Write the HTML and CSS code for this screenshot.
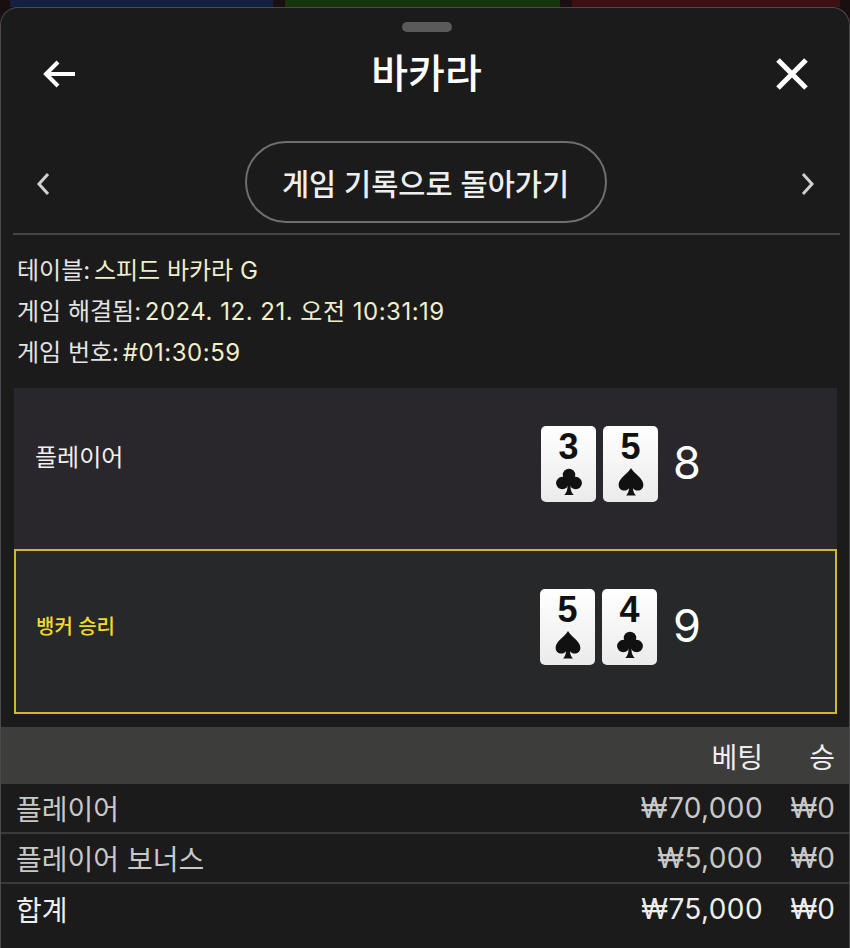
FILE: index.html
```html
<!DOCTYPE html>
<html lang="en">
<head>
    <meta charset="UTF-8">
    <meta name="viewport" content="width=device-width, initial-scale=1.0">
    <title>바카라</title>
    <link rel="stylesheet" href="styles.css">
</head>
<body>
    <svg class="sprites" width="0" height="0">
        <symbol id="club" viewBox="0 0 24 26">
            <circle cx="12" cy="6.5" r="5.8"/>
            <circle cx="5.8" cy="14" r="5.8"/>
            <circle cx="18.2" cy="14" r="5.8"/>
            <path d="M10.6 9h2.8v8c0 3.5.9 6 3 8H7.6c2.1-2 3-4.500 3-8z"/>
        </symbol>
        <symbol id="spade" viewBox="0 0 24 26">
            <path d="M12 0c2 4.500 11.500 9.500 11.500 15.500 0 3.500-2.500 5.500-5.200 5.500-1.800 0-3.300-.8-4.500-2.200.2 2.800 1 4.900 2.800 6.700H7.400c1.800-1.800 2.600-3.900 2.800-6.700C9 20.200 7.500 21 5.700 21 3 21 .5 19 .5 15.500.5 9.500 10 4.500 12 0z"/>
        </symbol>
    </svg>

    <div class="backdrop">
        <div class="backdrop-blue"></div>
        <div class="backdrop-green"></div>
        <div class="backdrop-red"></div>
    </div>

    <div class="sheet">
        <div class="handle"></div>

        <div class="header">
            <svg class="icon-back" viewBox="0 0 36 30">
                <path d="M33 15H4M16 3 4 15l12 12"/>
            </svg>
            <h1>바카라</h1>
            <svg class="icon-close" viewBox="0 0 34 34">
                <path d="M3 3l28 28M31 3 3 31"/>
            </svg>
        </div>

        <div class="nav">
            <svg class="chevron" viewBox="0 0 14 24"><path d="M12 2 3 12l9 10"/></svg>
            <button class="back-btn">게임 기록으로 돌아가기</button>
            <svg class="chevron" viewBox="0 0 14 24"><path d="M2 2l9 10-9 10"/></svg>
        </div>

        <div class="info">
            <p>테이블: <span>스피드 바카라 G</span></p>
            <p>게임 해결됨: <span class="digits">2024. 12. 21. 오전 10:31:19</span></p>
            <p>게임 번호: <span class="digits">#01:30:59</span></p>
        </div>

        <div class="hands">
            <div class="hand">
                <div class="hand-name">플레이어</div>
                <div class="cards">
                    <div class="card">3<svg><use href="#club"/></svg></div>
                    <div class="card">5<svg><use href="#spade"/></svg></div>
                </div>
                <div class="score">8</div>
            </div>
            <div class="hand winner">
                <div class="hand-name">뱅커 승리</div>
                <div class="cards">
                    <div class="card">5<svg><use href="#spade"/></svg></div>
                    <div class="card">4<svg><use href="#club"/></svg></div>
                </div>
                <div class="score">9</div>
            </div>
        </div>

        <div class="bets">
            <div class="row head">
                <span class="name"></span><span class="bet">베팅</span><span class="win">승</span>
            </div>
            <div class="row">
                <span class="name">플레이어</span><span class="bet">₩70,000</span><span class="win">₩0</span>
            </div>
            <div class="row">
                <span class="name">플레이어 보너스</span><span class="bet">₩5,000</span><span class="win">₩0</span>
            </div>
            <div class="row total">
                <span class="name">합계</span><span class="bet">₩75,000</span><span class="win">₩0</span>
            </div>
        </div>
    </div>
</body>
</html>
```

FILE: styles.css
```css
* {
    box-sizing: border-box;
}
body {
    margin: 0;
    height: 948px;
    overflow: hidden;
    background: #1a0f10;
    font-family: 'Inter', 'Noto Sans CJK KR', sans-serif;
    color: #fff;
}
.sprites {
    position: absolute;
}
.backdrop {
    display: flex;
    justify-content: space-between;
    height: 7px;
    padding: 0 10px;
}
.backdrop-blue {
    width: 263px;
    background: #14203f;
}
.backdrop-green {
    width: 275px;
    background: #16350f;
}
.backdrop-red {
    width: 268px;
    background: #3d1014;
}
.sheet {
    height: 941px;
    padding-top: 14px;
    background: #1b1b1b;
    border: 1px solid #4a4a4a;
    border-bottom: none;
    border-radius: 18px 18px 0 0;
}
.handle {
    width: 50px;
    height: 10px;
    margin: 0 auto;
    transform: translateX(2px);
    background: #5a5a5a;
    border-radius: 5px;
}
.header {
    display: flex;
    align-items: center;
    justify-content: space-between;
    height: 62px;
    margin-top: 11px;
    padding: 0 40px 0 41px;
}
h1 {
    margin: 0 0 6px;
    font-size: 40px;
    font-weight: 500;
}
.icon-back, .icon-close, .chevron {
    fill: none;
    stroke: #fff;
}
.icon-back {
    width: 36px;
    height: 30px;
    stroke-width: 4;
}
.icon-close {
    width: 34px;
    height: 34px;
    stroke-width: 5;
}
.nav {
    display: flex;
    align-items: center;
    justify-content: space-between;
    height: 82px;
    margin: 36px 12px 0;
    padding: 0 22px 0 23px;
}
.chevron {
    width: 14px;
    height: 24px;
    margin-top: 3px;
    stroke: #d0d0d0;
    stroke-width: 3;
}
.back-btn {
    width: 362px;
    height: 82px;
    background: none;
    border: 2px solid #6e6e6e;
    border-radius: 41px;
    color: #eee;
    font-family: inherit;
    font-size: 29.5px;
    font-weight: 500;
}
.info {
    margin: 10px 9px 0 12px;
    padding-top: 15px;
    border-top: 2px solid #454545;
}
.info p {
    margin: 0 0 0 4px;
    height: 41px;
    font-size: 24px;
    line-height: 41px;
    color: #e4e4e4;
    white-space: nowrap;
}
.info span {
    margin-left: -3px;
    color: #f0eecb;
}
.info .digits {
    letter-spacing: 0.5px;
}
.hands {
    margin: 15px 12px 0 13px;
}
.hand {
    display: flex;
    align-items: center;
    height: 161px;
    padding-left: 21px;
    background: #29272b;
}
.hand-name {
    width: 506px;
    margin-bottom: 26px;
    font-size: 24px;
    color: #f0f0f0;
}
.cards {
    display: flex;
    gap: 7px;
    margin-bottom: 10px;
}
.card {
    display: flex;
    flex-direction: column;
    align-items: center;
    width: 55px;
    height: 76px;
    background: linear-gradient(#ffffff, #ebebeb);
    border-radius: 5px;
    color: #111;
    font-family: 'Liberation Sans', sans-serif;
    font-size: 36px;
    font-weight: 700;
    line-height: 42px;
}
.card svg {
    width: 26px;
    height: 28px;
    fill: #111;
}
.score {
    margin: 0 0 12px 15px;
    font-family: 'Inter', sans-serif;
    font-size: 45px;
}
.winner {
    height: 165px;
    padding-left: 20px;
    background: #26282a;
    border: 2px solid #cfb82c;
}
.winner .hand-name {
    width: 505px;
    margin-bottom: 12px;
    color: #f5d928;
    font-size: 20px;
    font-weight: 500;
}
.winner .cards {
    margin: 0 0 10px -1px;
}
.winner .score {
    margin: 0 0 12px 16px;
}
.bets {
    margin-top: 13px;
}
.row {
    display: flex;
    align-items: center;
    height: 50px;
    padding-right: 14px;
    border-bottom: 2px solid #3a3a3a;
    font-size: 28px;
    color: #c8c8c8;
}
.row .name {
    flex: 1;
    padding-left: 15px;
}
.row .bet {
    width: 201px;
    text-align: right;
    letter-spacing: 0.4px;
}
.row .win {
    width: 72px;
    text-align: right;
}
.head {
    height: 57px;
    background: #3d3d3b;
    border-bottom: none;
    color: #eee;
}
.head .bet {
    letter-spacing: 0;
}
.total {
    border-bottom: none;
    color: #eee;
}
```
